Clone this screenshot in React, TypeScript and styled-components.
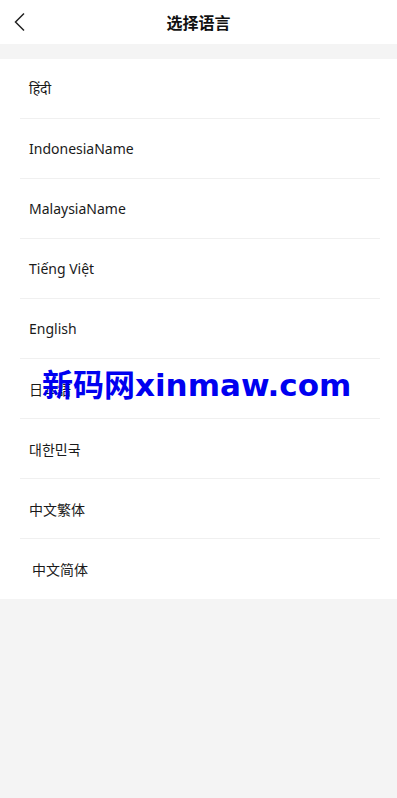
import React from "react";
import styled, { createGlobalStyle } from "styled-components";

const Global = createGlobalStyle`
  html, body { margin: 0; padding: 0; background: #f4f4f4; }
  body { font-family: "Noto Sans", "Noto Sans CJK SC", sans-serif; }
  * { box-sizing: border-box; }
`;

const Page = styled.div`
  position: relative;
  min-height: 798px;
  background: #f4f4f4;
`;

const Header = styled.header`
  position: relative;
  height: 44px;
  background: #fff;
  display: flex;
  align-items: center;
  justify-content: center;
`;

const Back = styled.button`
  position: absolute;
  left: 8px;
  top: 10px;
  width: 24px;
  height: 24px;
  padding: 0;
  border: 0;
  background: none;
  display: flex;
  align-items: center;
  justify-content: center;
`;

const Title = styled.h1`
  margin: 0;
  font-size: 16px;
  font-weight: 700;
  color: #111;
  font-family: "Noto Sans CJK SC", sans-serif;
`;

const List = styled.ul`
  list-style: none;
  margin: 15px 0 0;
  padding: 0 17px 0 20px;
  background: #fff;
`;

const Row = styled.li<{ $last?: boolean; $indent?: number }>`
  height: 60px;
  display: flex;
  align-items: center;
  padding-left: ${(p) => 9 + (p.$indent || 0)}px;
  border-bottom: ${(p) => (p.$last ? "none" : "1px solid #f0f0f0")};
  font-size: 14px;
  color: #1a1a1a;
  font-family: "Noto Sans", "Noto Sans CJK SC", "Noto Sans CJK KR", sans-serif;
`;

const Watermark = styled.div`
  position: absolute;
  left: 42px;
  top: 365px;
  font-size: 31px;
  line-height: 40px;
  font-weight: 700;
  color: #0000f0;
  font-family: "DejaVu Sans", "Noto Sans CJK SC", sans-serif;
  pointer-events: none;
  white-space: nowrap;
`;

const langs = [
  "हिंदी",
  "IndonesiaName",
  "MalaysiaName",
  "Tiếng Việt",
  "English",
  "日本語",
  "대한민국",
  "中文繁体",
  "中文简体",
];

export default function App() {
  return (
    <Page>
      <Global />
      <Header>
        <Back aria-label="back">
          <svg width="14" height="20" viewBox="0 0 14 20" fill="none">
            <path d="M11 1.5 L2.5 10 L11 18.5" stroke="#222" strokeWidth="1.5" />
          </svg>
        </Back>
        <Title>选择语言</Title>
      </Header>
      <List>
        {langs.map((l, i) => (
          <Row key={l} $last={i === langs.length - 1} $indent={i === langs.length - 1 ? 3 : 0}>
            {l}
          </Row>
        ))}
      </List>
      <Watermark>新码网xinmaw.com</Watermark>
    </Page>
  );
}
